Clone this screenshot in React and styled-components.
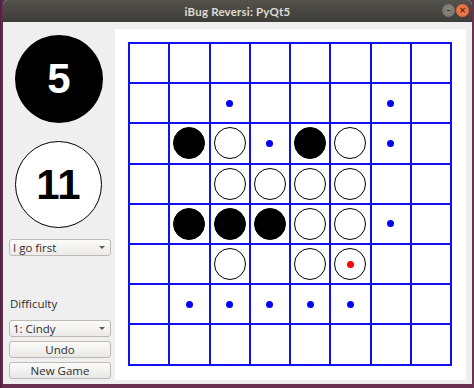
import React from 'react';
import styled, { createGlobalStyle } from 'styled-components';

const GlobalStyle = createGlobalStyle`
  html, body {
    margin: 0;
    padding: 0;
    background: #5b2a47;
    width: 474px;
    height: 388px;
    overflow: hidden;
  }
`;

const Desktop = styled.div`
  width: 474px;
  height: 388px;
  padding-left: 3px;
  box-sizing: border-box;
  background: linear-gradient(90deg, #4d1f3c 0px, #6a3050 3px);
`;

const Window = styled.div`
  width: 469px;
  height: 384px;
  display: flex;
  flex-direction: column;
  background: #efefef;
  border-radius: 5px 5px 0 0;
  overflow: hidden;
`;

const TitleBar = styled.div`
  height: 22px;
  flex: none;
  position: relative;
  display: flex;
  align-items: center;
  justify-content: center;
  background: linear-gradient(#53524d, #3d3c38);
  color: #dfdbd2;
  font-family: Lato, "Open Sans", sans-serif;
  font-weight: 700;
  font-size: 11.5px;
  letter-spacing: 0.2px;
`;

const WinButtons = styled.div`
  position: absolute;
  right: 3px;
  top: 4px;
  display: flex;
  gap: 1px;
`;

const WinButton = styled.div`
  width: 13px;
  height: 13px;
  border-radius: 50%;
  background: ${p => (p.close ? 'radial-gradient(#f58b5c, #e55a2b)' : 'radial-gradient(#8c8b86, #6d6c67)')};
  display: flex;
  align-items: center;
  justify-content: center;
  color: ${p => (p.close ? '#5a1c0a' : '#3c3b37')};
  font-family: "DejaVu Sans", sans-serif;
  font-size: 9px;
  font-weight: 700;
  line-height: 1;
`;

const Body = styled.div`
  flex: 1;
  display: flex;
  padding: 7px 3px 4px 0;
`;

const Side = styled.div`
  width: 112px;
  flex: none;
  display: flex;
  flex-direction: column;
  padding: 6px 4px 0 6px;
  box-sizing: border-box;
  font-family: "Open Sans", sans-serif;
  font-size: 11.5px;
  color: #3c3c3c;
`;

const Score = styled.div`
  width: ${p => (p.light ? 87 : 88)}px;
  height: ${p => (p.light ? 87 : 88)}px;
  margin: ${p => (p.light ? '18px 0 0 6px' : '0 0 0 6px')};
  box-sizing: border-box;
  border-radius: 50%;
  background: ${p => (p.light ? '#fff' : '#000')};
  border: ${p => (p.light ? '1.5px solid #000' : 'none')};
  color: ${p => (p.light ? '#000' : '#fff')};
  display: flex;
  align-items: center;
  justify-content: center;
  font-family: "Liberation Sans", Arial, sans-serif;
  font-weight: 700;
  font-size: 42px;
`;

const Combo = styled.div`
  height: 17px;
  margin-top: ${p => p.top}px;
  box-sizing: border-box;
  border: 1px solid #bdb9b3;
  border-radius: 3px;
  background: linear-gradient(#fbfbfa, #ecebe9);
  display: flex;
  align-items: center;
  justify-content: space-between;
  padding: 0 5px 0 3px;
  color: #2e2e2e;
  &::after {
    content: '';
    border-left: 3px solid transparent;
    border-right: 3px solid transparent;
    border-top: 3px solid #5a5a5a;
  }
`;

const Label = styled.div`
  margin-top: 39px;
  margin-left: 1px;
  height: 17px;
  line-height: 17px;
  color: #2e2e2e;
`;

const Button = styled.div`
  height: 17px;
  margin-top: ${p => p.top}px;
  box-sizing: border-box;
  border: 1px solid #bdb9b3;
  border-radius: 3px;
  background: linear-gradient(#fbfbfa, #e9e8e6);
  display: flex;
  align-items: center;
  justify-content: center;
  color: #2e2e2e;
`;

const BoardPanel = styled.div`
  width: 351px;
  height: 351px;
  background: #fff;
  padding: 13px;
  box-sizing: border-box;
`;

const Grid = styled.div`
  display: grid;
  grid-template-columns: repeat(8, 40.25px);
  grid-template-rows: repeat(8, 40.2px);
  border-left: 2px solid #1010f0;
  border-top: 2px solid #1010f0;
  width: max-content;
`;

const Cell = styled.div`
  border-right: 2px solid #1010f0;
  border-bottom: 2px solid #1010f0;
  display: flex;
  align-items: center;
  justify-content: center;
`;

const Piece = styled.div`
  width: 32px;
  height: 32px;
  box-sizing: border-box;
  border-radius: 50%;
  background: ${p => (p.black ? '#000' : '#fff')};
  border: 1.5px solid #000;
  display: flex;
  align-items: center;
  justify-content: center;
`;

const Dot = styled.div`
  width: 7px;
  height: 7px;
  border-radius: 50%;
  background: ${p => (p.red ? '#ff0000' : '#0000ff')};
`;

// b = black, w = white, . = hint, r = last move (white), - = empty
const BOARD = [
  '--------',
  '--.---.-',
  '-bw.bw.-',
  '--wwww--',
  '-bbbww.-',
  '--w-wr--',
  '-.....--',
  '--------',
];

function renderCell(c) {
  if (c === 'b') return <Piece black />;
  if (c === 'w') return <Piece />;
  if (c === 'r') return <Piece><Dot red /></Piece>;
  if (c === '.') return <Dot />;
  return null;
}

export default function App() {
  return (
    <Desktop>
      <GlobalStyle />
      <Window>
        <TitleBar>
          iBug Reversi: PyQt5
          <WinButtons>
            <WinButton>–</WinButton>
            <WinButton close>×</WinButton>
          </WinButtons>
        </TitleBar>
        <Body>
          <Side>
            <Score>5</Score>
            <Score light>11</Score>
            <Combo top={11}>I go first</Combo>
            <Label>Difficulty</Label>
            <Combo top={8}>1: Cindy</Combo>
            <Button top={4}>Undo</Button>
            <Button top={4}>New Game</Button>
          </Side>
          <BoardPanel>
            <Grid>
              {BOARD.map((row, r) =>
                row.split('').map((c, i) => <Cell key={r + '-' + i}>{renderCell(c)}</Cell>)
              )}
            </Grid>
          </BoardPanel>
        </Body>
      </Window>
    </Desktop>
  );
}
